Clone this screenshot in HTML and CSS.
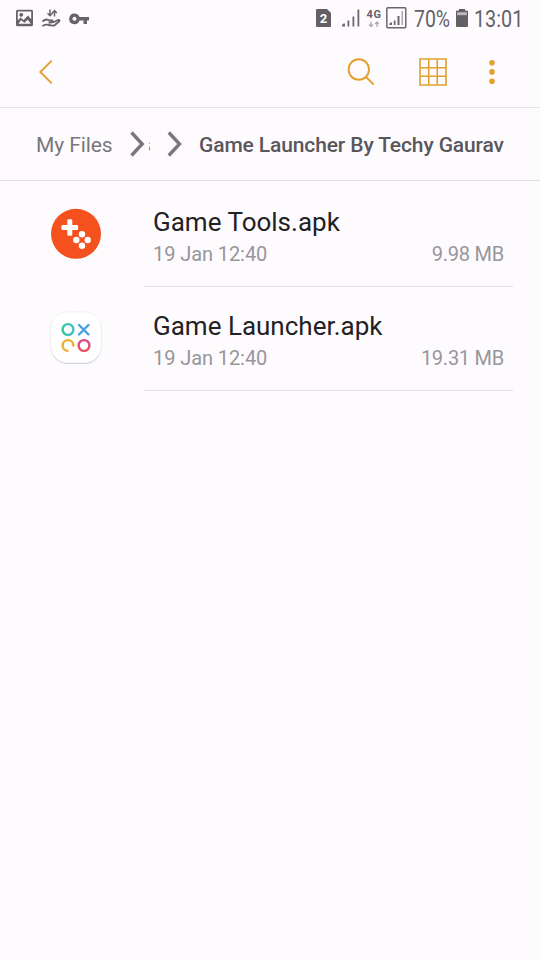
FILE: index.html
```html
<!DOCTYPE html>
<html lang="en">
<head>
<meta charset="utf-8">
<title>My Files</title>
<link rel="stylesheet" href="styles.css">
</head>
<body>
<header class="status">
  <svg class="st-image" width="18" height="18" viewBox="0 0 18 18"><path fill="#666468" fill-rule="evenodd" d="M1.500.8h14q1.500 0 1.500 1.500v13.500q0 1.500-1.500 1.500h-14Q0 17.300 0 15.800V2.300Q0 .8 1.500.8zM1.800 2.500v8.800l2.700-2.800L7.500 11l4.500-4.500 3.200 3.800V2.500zM2.500 14.800h12.300l-3-4-3.300 3-3.500-2.500zM5 4.300a1.700 1.700 0 1 0 .01 0z"/><circle cx="5.500" cy="5.800" r="1.700" fill="#666468"/></svg>
  <svg class="st-data" width="19" height="19" viewBox="0 0 19 19" fill="none" stroke="#666468"><path stroke-width="1.500" d="M8 .5v6M5.500 4.300 8 6.800l2.500-2.500M12.500 7.500V2M10.200 4l2.300-2.500L14.800 4"/><path stroke-width="1.800" stroke-linejoin="round" d="M.5 12.500q3-3 6-1.500 1 .5 4 .5.500 2-1.500 2H6.500M11 13.500l5.500-2.700q1.500.2.800 1.400l-5 4.300q-4 .3-7-.8-2-.2-5 1.300"/></svg>
  <svg class="st-key" width="20" height="12" viewBox="0 0 20 12"><path fill="#666468" fill-rule="evenodd" d="M5.500.5a5.300 5.300 0 0 1 5 3.500H20v3.500h-2V11h-3.500V7.500h-4a5.300 5.300 0 1 1-5-7zm0 3.300a2 2 0 1 0 .01 0z"/></svg>
  <span class="spacer"></span>
  <span class="sim">2</span>
  <svg class="st-signal" width="18" height="18" viewBox="0 0 18 18" fill="#6b696d"><path d="M0 17.500v-1.500l1.500-1.500H3v3zM5.500 17.500v-6h1.800v6zM10.500 17.500v-10h1.800v10zM15.500 17.500V.5h1.800v17z"/></svg>
  <span class="net"><b>4G</b><svg width="12" height="7" viewBox="0 0 12 7" fill="none" stroke="#aaa8ac" stroke-width="1.200"><path d="M3 .5v5M1 3.500l2 2 2-2M9 6V1M7 3l2-2 2 2"/></svg></span>
  <svg class="st-signal2" width="21" height="22" viewBox="0 0 21 22"><rect x=".8" y=".8" width="19" height="20" rx="1" fill="none" stroke="#69676b" stroke-width="1.500"/><path fill="#69676b" d="M3.500 18v-1.500l1-1H6V18zM7.800 18v-4.500h1.700V18zM11.500 18V9h2v9z"/><path fill="#aaa8ac" d="M15.500 18V4H17v14z"/></svg>
  <span class="pct"><span>70%</span></span>
  <svg class="st-batt" width="12" height="18" viewBox="0 0 12 18"><path fill="#626064" d="M3 0h6v1.500h2q1 0 1 1V17q0 1-1 1H1q-1 0-1-1V2.500q0-1 1-1h2z"/><path fill="#bbb9bd" d="M1.200 3.200h9.600v3H1.200z"/></svg>
  <span class="clock"><span>13:01</span></span>
</header>
<nav class="toolbar">
  <svg class="back" width="15" height="24" viewBox="0 0 15 24" fill="none" stroke="#e2a02f" stroke-width="1.900"><path d="M13.700.7 2.300 12l11.400 11.300"/></svg>
  <span class="spacer"></span>
  <svg class="search" width="28" height="28" viewBox="0 0 28 28" fill="none" stroke="#e2a02f" stroke-width="1.900"><circle cx="11.800" cy="11.500" r="10.200"/><path d="m19 19 7.700 7.500"/></svg>
  <svg class="grid" width="28" height="28" viewBox="0 0 28 28" fill="none" stroke="#e2a02f" stroke-width="1.600"><path d="M1 1h26v26H1zM9.700 1v26M18.300 1v26M1 9.700h26M1 18.300h26"/></svg>
  <svg class="more" width="6" height="26" viewBox="0 0 6 26" fill="#e2a02f"><circle cx="3" cy="3.700" r="2.800"/><circle cx="3" cy="12.900" r="2.800"/><circle cx="3" cy="22.200" r="2.800"/></svg>
</nav>
<nav class="crumbs">
  <span class="root">My Files</span>
  <svg class="sep" width="16" height="26" viewBox="0 0 16 26" fill="none" stroke="#79777b" stroke-width="3.400"><path d="M1.500 1.500 12.200 13 1.500 24.500"/></svg>
  <span class="cut">a</span>
  <svg class="sep sep2" width="16" height="26" viewBox="0 0 16 26" fill="none" stroke="#79777b" stroke-width="3.400"><path d="M1.800 1.500 12.500 13 1.800 24.500"/></svg>
  <span class="here">Game Launcher By Techy Gaurav</span>
</nav>
<main>
  <article class="file">
    <svg class="icon" width="54" height="56" viewBox="0 0 54 56"><circle cx="27" cy="27.800" r="25" fill="#f4511e"/><g fill="#fff"><rect x="18.300" y="13.200" width="5" height="16.600" rx="1.300"/><rect x="12.500" y="19" width="16.600" height="5" rx="1.300"/><circle cx="33" cy="28.300" r="3.200"/><circle cx="27.300" cy="34" r="3.200"/><circle cx="38.700" cy="34" r="3.200"/><circle cx="33" cy="39.700" r="3.200"/></g></svg>
    <div class="info">
      <h2>Game Tools.apk</h2>
      <p><span class="date">19 Jan 12:40</span><span class="size">9.98 MB</span></p>
    </div>
  </article>
  <article class="file">
    <svg class="icon" width="54" height="56" viewBox="0 0 54 56"><defs><linearGradient id="g1"><stop stop-color="#35c7a0"/><stop offset="1" stop-color="#45bdc0"/></linearGradient><linearGradient id="g2" x2="0" y2="1"><stop stop-color="#dd4689"/><stop offset="1" stop-color="#ec5360"/></linearGradient></defs><rect x="1.500" y="3.100" width="51" height="51" rx="17" fill="#d2d0d5"/><rect x="1.500" y="1.800" width="51" height="51" rx="17" fill="#fff" stroke="#eeecf0" stroke-width=".8"/><g fill="none" stroke-width="2.400"><circle cx="19" cy="19.500" r="5.400" stroke="url(#g1)"/><path stroke="#4a9fe0" stroke-linecap="round" d="m30 15 9.500 9.500M39.500 15l-4 4M33.300 21.300l-3.300 3.200"/><path stroke="#eeb02e" stroke-linecap="round" d="M18.500 40.900a5.400 5.400 0 1 1 5.900-5.400"/><circle cx="35" cy="35.500" r="5.400" stroke="url(#g2)"/></g></svg>
    <div class="info">
      <h2>Game Launcher.apk</h2>
      <p><span class="date">19 Jan 12:40</span><span class="size">19.31 MB</span></p>
    </div>
  </article>
</main>
</body>
</html>
```
FILE: styles.css
```css
* { box-sizing: border-box; }
body {
  margin: 0;
  width: 540px;
  height: 960px;
  overflow: hidden;
  background: #fefbff;
  font-family: Roboto, sans-serif;
}
svg { display: block; flex: none; }
.spacer { flex: 1; }
.status { display: flex; height: 36px; align-items: flex-start; padding: 0 17px 0 16px; color: #646266; }
.st-image { margin-top: 9px; }
.st-data { margin: 9px 0 0 8px; }
.st-key { margin: 13px 0 0 8px; }
.sim {
  width: 15px; height: 18px; margin-top: 9px;
  background: #626064; color: #fff;
  border-radius: 1px;
  clip-path: polygon(0 0, 11px 0, 15px 4px, 15px 18px, 0 18px);
  font: bold 13px/19px Roboto, sans-serif; text-align: center;
}
.st-signal { margin: 9px 0 0 11px; }
.net { width: 16px; margin: 9px 0 0 6px; display: flex; flex-direction: column; align-items: center; }
.net b { font: bold 11px/11px Roboto, sans-serif; letter-spacing: .7px; }
.net svg { margin-top: 1px; }
.st-signal2 { margin: 7px 0 0 4px; }
.pct, .clock { font-size: 23px; line-height: 39px; white-space: nowrap; }
.pct { width: 36px; margin-left: 7px; }
.clock { width: 49px; margin-left: 6px; }
.pct span, .clock span { display: inline-block; transform-origin: left; }
.pct span { transform: scaleX(.845); }
.clock span { transform: scaleX(.86); }
.st-batt { margin: 9px 0 0 6px; }
.toolbar { display: flex; height: 72px; align-items: center; padding: 0 45px 0 38px; border-bottom: 1px solid #e6e3e7; }
.search { margin-right: 44px; }
.grid { margin-right: 42px; }
.crumbs { display: flex; height: 73px; align-items: center; padding-left: 36px; border-bottom: 1px solid #e4e1e5; white-space: nowrap; font-size: 21px; color: #79777b; }
.crumbs span { padding-top: 2px; }
.root { width: 94px; letter-spacing: -.1px; }
.cut { width: 2px; margin-left: 2px; overflow: hidden; font-size: 20px; }
.sep2 { margin-left: 17px; }
.here { margin-left: 16px; font-weight: 500; letter-spacing: -.12px; color: #59575b; }
.file { display: flex; height: 104px; padding: 0 27px 0 49px; }
.icon { margin-top: 23px; }
.info { flex: 1; margin-left: 41px; padding: 22px 9px 0; border-bottom: 1px solid #e4e1e5; }
main { padding-top: 2px; }
h2 { margin: 0; font-size: 26px; line-height: 34px; font-weight: 400; color: #222124; }
p { margin: 0; display: flex; justify-content: space-between; font-size: 20px; line-height: 30px; color: #98969a; }
.date { letter-spacing: -.08px; }
.size { letter-spacing: -.25px; }
```
